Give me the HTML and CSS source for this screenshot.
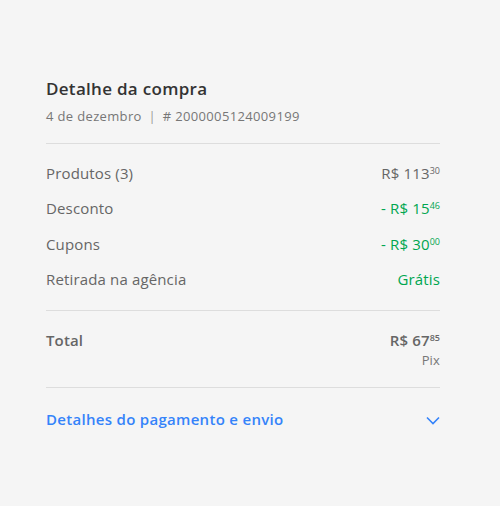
FILE: index.html
```html
<!DOCTYPE html>
<html lang="pt-BR">
<head>
    <meta charset="UTF-8">
    <meta name="viewport" content="width=device-width, initial-scale=1.0">
    <title>Detalhe da compra</title>
    <link rel="stylesheet" href="styles.css">
</head>
<body>

    <div class="summary">
        <div class="summary__head">
            <h1 class="summary__title">Detalhe da compra</h1>
            <p class="summary__meta">4 de dezembro <span class="summary__sep">|</span> # 2000005124009199</p>
        </div>

        <div class="summary__rows">
            <div class="row">
                <span>Produtos (3)</span>
                <span class="price">R$ 113<sup>30</sup></span>
            </div>
            <div class="row">
                <span>Desconto</span>
                <span class="price price--green">- R$ 15<sup>46</sup></span>
            </div>
            <div class="row">
                <span>Cupons</span>
                <span class="price price--green">- R$ 30<sup>00</sup></span>
            </div>
            <div class="row">
                <span>Retirada na agência</span>
                <span class="price price--green">Grátis</span>
            </div>
        </div>

        <div class="summary__total">
            <span class="total__label">Total</span>
            <div class="total__value">
                <span class="price price--bold">R$ 67<sup>85</sup></span>
                <span class="total__method">Pix</span>
            </div>
        </div>

        <button class="summary__more" type="button">
            <span>Detalhes do pagamento e envio</span>
            <svg width="14" height="9" viewBox="0 0 14 9" fill="none">
                <path d="M1 1.5l6 6 6-6" stroke="#3483fa" stroke-width="1.6"/>
            </svg>
        </button>
    </div>

</body>
</html>
```

FILE: styles.css
```css
body {
    margin: 0;
    background: #f5f5f5;
    font-family: "Open Sans", "Liberation Sans", sans-serif;
    color: #666;
    letter-spacing: 0.15px;
}

.summary {
    width: 394px;
    padding: 78px 0 0 46px;
}

.summary__head {
    padding-bottom: 19px;
    border-bottom: 1px solid #ddd;
}

.summary__title {
    margin: 0;
    font-size: 17px;
    font-weight: 600;
    color: #333;
    line-height: 22px;
    letter-spacing: 0.3px;
}

.summary__meta {
    margin: 8px 0 0;
    font-size: 13px;
    line-height: 16px;
    color: #777;
    letter-spacing: 0.35px;
}

.summary__sep {
    margin: 0 3px;
    color: #999;
}

.summary__rows {
    display: flex;
    flex-direction: column;
    gap: 15.3px;
    padding: 19px 0 21px;
    border-bottom: 1px solid #ddd;
}

.row {
    display: flex;
    justify-content: space-between;
    font-size: 15px;
    line-height: 20px;
}

.price sup {
    font-size: 9px;
    vertical-align: top;
    position: relative;
    top: -2px;
    letter-spacing: 0;
}

.price--green {
    color: #00a650;
}

.price--bold {
    font-weight: 600;
}

.summary__total {
    display: flex;
    justify-content: space-between;
    padding: 19px 0 18px;
    border-bottom: 1px solid #ddd;
    font-size: 15px;
    line-height: 20px;
}

.total__label {
    font-weight: 600;
}

.total__value {
    display: flex;
    flex-direction: column;
    align-items: flex-end;
}

.total__method {
    margin-top: 1px;
    font-size: 13px;
    line-height: 18px;
    color: #777;
}

.summary__more {
    display: flex;
    justify-content: space-between;
    align-items: center;
    width: 100%;
    padding: 21px 0;
    border: none;
    background: none;
    font: inherit;
    font-size: 15px;
    font-weight: 600;
    letter-spacing: 0.3px;
    color: #3483fa;
    cursor: pointer;
}

.summary__more svg {
    margin-top: 3px;
}
```
